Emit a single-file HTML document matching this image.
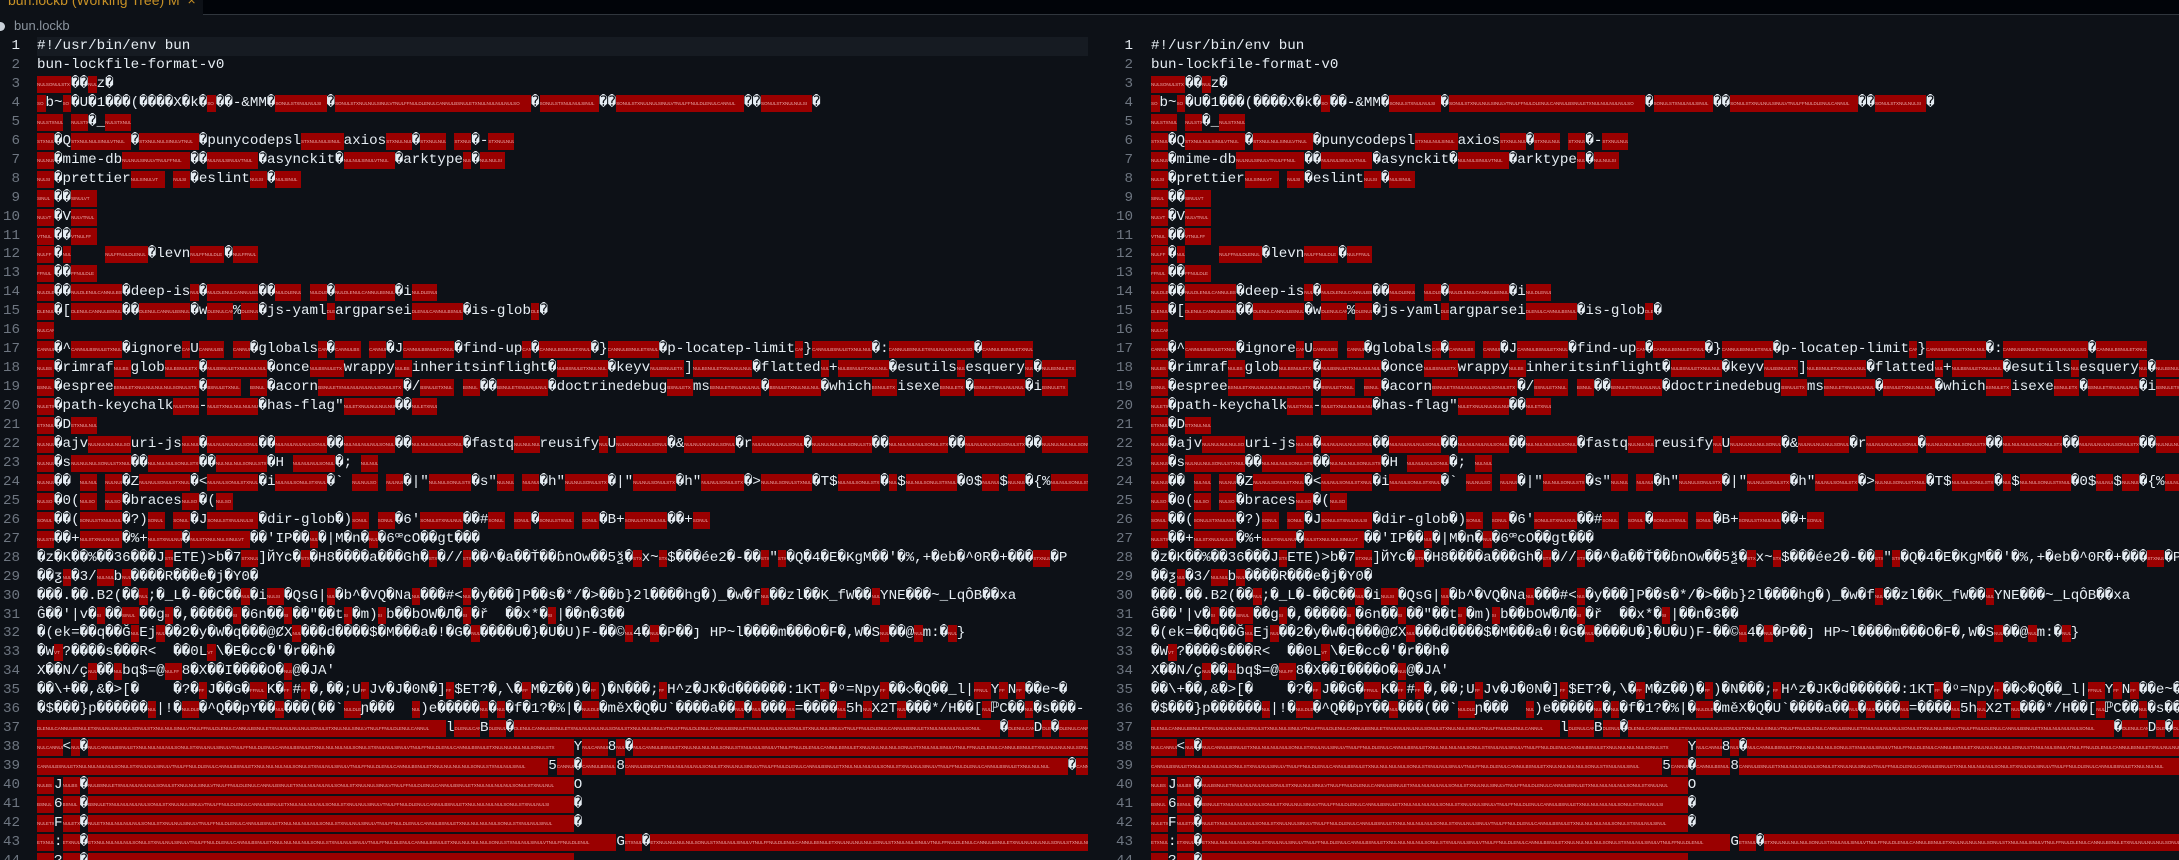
<!DOCTYPE html>
<html><head><meta charset="utf-8">
<style>
html,body{margin:0;padding:0;background:#0d1117;width:2179px;height:860px;overflow:hidden;position:relative;font-family:"Liberation Mono","DejaVu Sans Mono",monospace;}
#tabbar{position:absolute;left:0;top:0;width:2179px;height:14px;background:#010409;border-bottom:1px solid #30363d;}
#tab{position:absolute;left:0;top:0;width:203px;height:15px;background:#0d1117;}
#tab span{position:absolute;left:8px;top:-8px;font:14px "Liberation Sans",sans-serif;color:#c69026;white-space:nowrap;}
#crumb{position:absolute;left:14px;top:18px;font:13px "Liberation Sans",sans-serif;color:#8b949e;}
#dot{position:absolute;left:-4px;top:22px;width:9px;height:9px;border-radius:50%;background:#c9d1d9;}
.pane{position:absolute;top:37px;overflow:hidden;height:823px;}
#lp{left:0;width:1088px;}
#rp{left:1088px;width:1091px;}
.ln{position:absolute;height:19px;line-height:19px;font-size:14.2px;color:#6e7681;text-align:right;}
.row{position:absolute;height:19px;white-space:nowrap;}
.c{display:inline-block;width:8.52px;height:19px;line-height:19px;font-size:14.2px;color:#e6edf3;text-align:center;vertical-align:top;overflow:visible;}
.r{display:inline-block;height:17px;margin-top:1px;background:#9a0000;vertical-align:top;color:#e8a4a4;font:4.6px "Liberation Sans",sans-serif;line-height:17px;overflow:hidden;letter-spacing:-0.1px;}
#hl{position:absolute;left:37px;top:37px;width:1051px;height:19px;background:#161b22;}
</style></head><body>
<div id="tabbar"></div>
<div id="tab"><span>bun.lockb (Working Tree) M &nbsp;×</span></div>
<div id="dot"></div><div id="crumb">bun.lockb</div>
<div id="hl"></div>
<div class="pane" id="lp"></div>
<div class="pane" id="rp"></div>
<script>
var L=[
"#!/usr/bin/env bun",
"bun-lockfile-format-v0",
"[4]��[1]z�",
"[1]b~[1]�U�1���(����X�k�[1]��-&MM�[6]�[23]�[7]��[15]��[6]�",
"[3] [2]�_[3]",
"[2]�Q[7]�[7]�punycodepsl[5]axios[3]�[3] [2]�-[3]",
"[2]�mime-db[8]��[6]�asynckit�[6]�arktype[1]�[3]",
"[2]�prettier[4] [2]�eslint[2]�[3]",
"[2]��[3]",
"[2]�V[3]",
"[2]��[3]",
"[2]�[1]    [5]�levn[4]�[3]",
"[2]��[3]",
"[2]��[6]�deep-is[1]�[6]��[3] [2]�[7]�i[3]",
"[2]�[[6]��[6]�w[3]%[2]�js-yaml[1]argparsei[6]�is-glob[1]�",
"[2]",
"[2]�^[6]�ignore[1]U[3] [2]�globals[1]�[3] [2]�J[6]�find-up[1]�[6]�}[6]�p-locatep-limit[1]}[7]�:[10]�[6]",
"[2]�rimraf[2]glob[4]�[7]�once[4]wrappy[2]inheritsinflight�[6]�keyv[4]][7]�flatted[1]+[6]�esutils[1]esquery[1]�[4]",
"[2]�espree[10]�[4] [2]�acorn[10]�/[4] [2]��[6]�doctrinedebug[3]ms[6]�[6]�which[3]isexe[3]�[6]�i[3]",
"[2]�path-keychalk[3]-[6]�has-flag\"[6]��[3]",
"[2]�D[3]",
"[2]�ajv[5]uri-js[2]�[6]��[6]��[6]��[6]�fastq[3]reusify[1]U[6]�&[6]�r[6]�[7]��[7]��[7]��[6]",
"[2]�s[7]��[6]��[6]�H [5]�; [2]",
"[2]�� [2] [2]�Z[6]�<[6]�i[6]�` [3] [2]�|\"[5]�s\"[2] [2]�h\"[5]�|\"[5]�h\"[5]�>[6]�T$[5]�[1]$[6]�0$[2]$[2]�{%[5]",
"[2]�0([2] [2]�braces[2]�([2]",
"[2]��([5]�?)[2] [2]�J[6]�dir-glob�)[2] [2]�6'[5]��#[2] [2]�[4] [2]�B+[5]��+[2]",
"[2]��+[5]�%+[4]�[7]��'IP��[1]�|M�n�[1]�6ꟹcO��gt���",
"�z�K��%��36���J[1]ETE)>b�7[2]]ЙYc�[1]�H8����a���Gh�[1]�//[1]��^�a��Ť��ɓnOw��5ѯ�[1]x~[1]$���ée2�-��[1]\"[1]�Q�4�E�KgM��'�%,+�eb�^0R�+���[2]�P",
"��ƺ[1]�3/[2]b[1]����R���e�j�Y0�",
"���.��.B2(��[1];�_L�-��C��[1]�i[2]�QsG|[1]�b^�VQ�Na[1]���#<[1]�y���]P��s�*/�>��b}2l����hg�)_�w�f[1]��zl��K_fW��[1]YNE���~_LqÔB��xa",
"Ĝ��'|v�[1]��[2]��g[1]�,�����[1]�6n��[1]��\"��t[1]�m)[1]b��bOW�Л�[1]�ř  ��x*�[1]|��n�3��",
"�(ek=��q��Ğ[1]Ej[1]��2�y�W�q���@ȻX[1]���d����$�M���a�!�G�[1]����U�}�U�U)F-��©[1]4�[1]�P��ȷ HP~l����m���O�F�,W�S[1]��@[1]m:�[1]}",
"�W[1]?����s���R<  ��0L[1]\\�E�cc�'�r��h�",
"X��N/ç[1]��[1]bq$=@[2]8�X��I����O�[1]@�JA'",
"��\\+��,&�>[�    �?�[1]J��G�[2]K�[1]#[1]�,��;U[1]Jv�J�0N�][1]$ET?�,\\�[1]M�Z��)�[1])�N���;[1]H^z�JK�d������:1KT[1]�ͦ=Npy[1]��◇�Q��_l|[2]Y[1]N[1]��e~�",
"�$���}p������[1]|!�[2]�^Q��pY��[1]���(��`[2]ɲ���  [1])e�����[1]�[1]�f�1?�%|�[2]�měX�Q�U`����a��[1]�[1]���[1]=����[1]5h[1]X2T[1]���*/H��[[1]ℙC��[1]�s���-",
"[48]l[3]B[2]�[57]�[3]D[1]�[6]",
"[3]<[1]�[57]Y[3]8[1]�[60]",
"[60]5[2]�[4]8[52]�[4]",
"[2]J[2]�[57]O",
"[2]6[2]�[57]�",
"[2]F[2]�[57]�",
"[2]:[2]�[62]G[2]�[60]",
"[2]?[2]�[57]"
];
var LAB=["NUL","NUL","NUL","SO","NUL","STX","NUL","NUL","SI","NUL","VT","NUL","FF","NUL","DLE","NUL","CAN","NUL","BS","NUL","ETX","NUL"];
function build(pane,numRight,textLeft,maxw){
  var h="",lh=18.95;
  for(var i=0;i<L.length;i++){
    var y=(i*lh).toFixed(2);
    h+='<div class="ln" style="top:'+y+'px;left:0;width:'+numRight+'px;'+(i==0?'color:#e6edf3':'')+'">'+(i+1)+'</div>';
    var s=L[i],out="",re=/\[(\d+)\]/g,last=0,m;
    var chars=function(t){var o="";for(var ch of t){o+='<span class="c">'+(ch==" "?"&nbsp;":ch.replace("&","&amp;").replace("<","&lt;").replace(">","&gt;"))+'</span>';}return o;};
    while((m=re.exec(s))){
      out+=chars(s.slice(last,m.index));
      var n=+m[1],lab="";
      for(var k=0;k<n;k++)lab+=LAB[(k+i)%LAB.length];
      out+='<span class="r" style="width:'+(n*8.52).toFixed(2)+'px">'+lab+'</span>';
      last=re.lastIndex;
    }
    out+=chars(s.slice(last));
    h+='<div class="row" style="top:'+y+'px;left:'+textLeft+'px;width:'+maxw+'px;overflow:hidden">'+out+'</div>';
  }
  document.getElementById(pane).innerHTML=h;
}
build("lp",20,37,1051);
build("rp",45,63,1028);
</script>
</body></html>
